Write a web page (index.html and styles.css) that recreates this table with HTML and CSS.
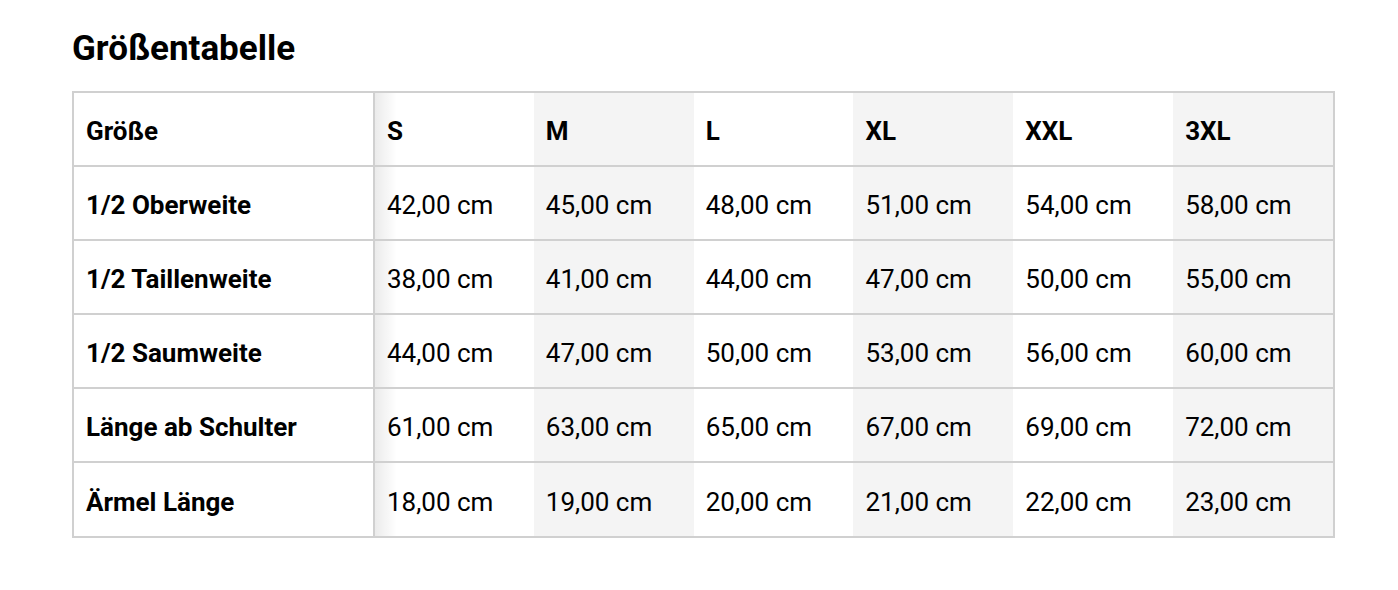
FILE: index.html
```html
<!DOCTYPE html>
<html lang="de">
<head>
<meta charset="utf-8">
<link rel="stylesheet" href="styles.css">
</head>
<body>
<div class="page">
  <h2 class="title">Größentabelle</h2>
  <div class="table-wrap">
    <table class="sizes">
      <thead>
        <tr><th class="label">Größe</th><th>S</th><th class="alt">M</th><th>L</th><th class="alt">XL</th><th>XXL</th><th class="alt">3XL</th></tr>
      </thead>
      <tbody>
        <tr><th class="label">1/2 Oberweite</th><td>42,00 cm</td><td class="alt">45,00 cm</td><td>48,00 cm</td><td class="alt">51,00 cm</td><td>54,00 cm</td><td class="alt">58,00 cm</td></tr>
        <tr><th class="label">1/2 Taillenweite</th><td>38,00 cm</td><td class="alt">41,00 cm</td><td>44,00 cm</td><td class="alt">47,00 cm</td><td>50,00 cm</td><td class="alt">55,00 cm</td></tr>
        <tr><th class="label">1/2 Saumweite</th><td>44,00 cm</td><td class="alt">47,00 cm</td><td>50,00 cm</td><td class="alt">53,00 cm</td><td>56,00 cm</td><td class="alt">60,00 cm</td></tr>
        <tr><th class="label">Länge ab Schulter</th><td>61,00 cm</td><td class="alt">63,00 cm</td><td>65,00 cm</td><td class="alt">67,00 cm</td><td>69,00 cm</td><td class="alt">72,00 cm</td></tr>
        <tr><th class="label">Ärmel Länge</th><td>18,00 cm</td><td class="alt">19,00 cm</td><td>20,00 cm</td><td class="alt">21,00 cm</td><td>22,00 cm</td><td class="alt">23,00 cm</td></tr>
      </tbody>
    </table>
  </div>
</div>
</body>
</html>
```
FILE: styles.css
```css
html, body {
  margin: 0;
  padding: 0;
  background: #fff;
}
body {
  font-family: Roboto, "Liberation Sans", sans-serif;
  color: #000;
}
.page {
  padding: 28px 0 0 72px;
}
.title {
  margin: 0;
  font-size: 35px;
  line-height: 42px;
  font-weight: 700;
}
.table-wrap {
  margin-top: 21px;
  width: 1263px;
  border: 2px solid #d0d0d0;
  box-sizing: border-box;
}
.sizes {
  border-collapse: collapse;
  width: 100%;
  table-layout: fixed;
}
.sizes th,
.sizes td {
  height: 74px;
  padding: 4px 12px 0;
  text-align: left;
  vertical-align: middle;
  font-size: 26px;
  box-sizing: border-box;
}
.sizes thead th {
  height: 73px;
}
.sizes th {
  font-weight: 700;
}
.sizes td {
  font-weight: 400;
}
.sizes tbody tr {
  border-top: 2px solid #d0d0d0;
}
.sizes .label {
  width: 300px;
  padding-left: 12px;
  border-right: 2px solid #d0d0d0;
  position: relative;
}
.sizes .label::after {
  content: "";
  position: absolute;
  top: 0;
  bottom: 0;
  right: -24px;
  width: 22px;
  background: linear-gradient(to right, rgba(0,0,0,0.08), rgba(0,0,0,0));
  pointer-events: none;
}
.sizes .alt {
  background: #f4f4f4;
}
```
